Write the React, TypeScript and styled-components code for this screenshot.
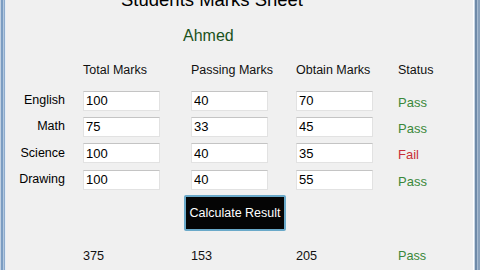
import * as React from 'react';
import styled, { createGlobalStyle } from 'styled-components';

const GlobalStyle = createGlobalStyle`
   html, body {
      margin: 0;
      padding: 0;
      background: #f0f0f0;
      overflow: hidden;
   }
   body {
      font-family: 'Liberation Sans', Arial, sans-serif;
   }
`;

const columns = '77px 108px 105px 102px 1fr';

const Window = styled.div`
   width: 480px;
   height: 270px;
   box-sizing: border-box;
   display: flex;
   flex-direction: column;
   overflow: hidden;
   padding: 0 7px 0 6px;
   background:
      linear-gradient(
            to right,
            #c2d1e3 0 1px,
            #7c9dc2 1px 3px,
            #b4c8de 3px 4px,
            #8eabcc 4px 5px,
            #e6edf5 5px 6px
         )
         left top / 6px 100% no-repeat,
      linear-gradient(
            to right,
            #ffffff 0 1px,
            #c8d5e3 1px 2px,
            #6f8aa8 2px 4px,
            #a8bbd0 4px 5px,
            #8aa1bb 5px 7px
         )
         right top / 7px 100% no-repeat,
      #f0f0f0;
`;

const Title = styled.div`
   margin-top: -10px;
   padding-left: 115px;
   font-size: 18.5px;
   line-height: 20px;
   color: #000;
`;

const StudentName = styled.div`
   margin-top: 17px;
   padding-left: 177px;
   font-size: 16px;
   line-height: 18px;
   color: #1b521b;
`;

const MarksGrid = styled.div`
   margin-top: 17.7px;
   display: grid;
   grid-template-columns: ${columns};
   grid-template-rows: 21.7px repeat(4, 20px);
   row-gap: 6.3px;
   align-items: center;
`;

const Header = styled.div`
   align-self: start;
   font-size: 12.5px;
   line-height: 15px;
   color: #111;
`;

const SubjectLabel = styled.div`
   justify-self: end;
   padding-right: 18px;
   font-size: 12.5px;
   line-height: 15px;
   color: #000;
`;

const MarkInput = styled.input`
   width: 77px;
   height: 20px;
   box-sizing: border-box;
   margin: 0;
   padding: 0 0 0 2px;
   background: #fff;
   border: 1px solid #e2e2e2;
   border-top-color: #c4c4c4;
   font-family: 'Liberation Sans', Arial, sans-serif;
   font-size: 13px;
   color: #000;
   outline: none;
`;

const Status = styled.div<{ $pass: boolean }>`
   padding-top: 3px;
   font-size: 13px;
   line-height: 15px;
   color: ${(p) => (p.$pass ? '#3a883a' : '#c8303a')};
`;

const CalculateButton = styled.button`
   align-self: flex-start;
   margin: 5.3px 0 0 178px;
   width: 102px;
   height: 36px;
   box-sizing: border-box;
   padding: 0;
   background: #050505;
   border: 2px solid #6aa9c9;
   border-radius: 2px;
   color: #fff;
   font-family: 'Liberation Sans', Arial, sans-serif;
   font-size: 12.5px;
   cursor: pointer;
`;

const TotalsRow = styled.div`
   margin-top: 18.2px;
   display: grid;
   grid-template-columns: ${columns};
   font-size: 12.7px;
   line-height: 15px;
   color: #111;
`;

const TotalStatus = styled.div`
   color: #3a883a;
`;

const subjects = [
   { name: 'English', total: 100, passing: 40, obtained: 70 },
   { name: 'Math', total: 75, passing: 33, obtained: 45 },
   { name: 'Science', total: 100, passing: 40, obtained: 35 },
   { name: 'Drawing', total: 100, passing: 40, obtained: 55 },
];

export default function App() {
   const total = subjects.reduce((s, x) => s + x.total, 0);
   const passing = subjects.reduce((s, x) => s + x.passing, 0);
   const obtained = subjects.reduce((s, x) => s + x.obtained, 0);

   return (
      <>
         <GlobalStyle />
         <Window>
            <Title>Students Marks Sheet</Title>
            <StudentName>Ahmed</StudentName>
            <MarksGrid>
               <span />
               <Header>Total Marks</Header>
               <Header>Passing Marks</Header>
               <Header>Obtain Marks</Header>
               <Header>Status</Header>
               {subjects.map((s) => (
                  <React.Fragment key={s.name}>
                     <SubjectLabel>{s.name}</SubjectLabel>
                     <div>
                        <MarkInput value={s.total} readOnly />
                     </div>
                     <div>
                        <MarkInput value={s.passing} readOnly />
                     </div>
                     <div>
                        <MarkInput value={s.obtained} readOnly />
                     </div>
                     <Status $pass={s.obtained >= s.passing}>
                        {s.obtained >= s.passing ? 'Pass' : 'Fail'}
                     </Status>
                  </React.Fragment>
               ))}
            </MarksGrid>
            <CalculateButton>Calculate Result</CalculateButton>
            <TotalsRow>
               <span />
               <div>{total}</div>
               <div>{passing}</div>
               <div>{obtained}</div>
               <TotalStatus>Pass</TotalStatus>
            </TotalsRow>
         </Window>
      </>
   );
}
